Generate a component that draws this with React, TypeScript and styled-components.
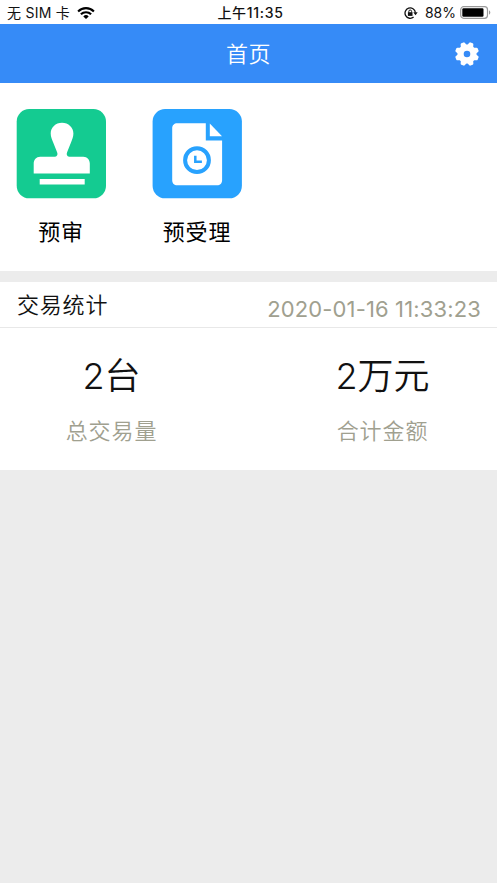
import React from 'react';
import styled, { createGlobalStyle } from 'styled-components';

const GlobalStyle = createGlobalStyle`
  * { box-sizing: border-box; }
  html, body { margin: 0; background: #ececec; }
  body { font-family: Inter, "Noto Sans CJK SC", sans-serif; color: #111; }
  svg { display: block; flex: none; }
`;

const Screen = styled.main`
  min-height: 883px;
  display: flex;
  flex-direction: column;
  background: #ececec;
`;

const StatusBar = styled.div`
  height: 24px;
  padding: 2px 6px 0 7px;
  display: grid;
  grid-template-columns: 1fr auto 1fr;
  align-items: center;
  background: #fff;
  font-size: 14px;
  line-height: 20px;
  white-space: nowrap;
`;

const StatusGroup = styled.div<{ $end?: boolean }>`
  display: flex;
  align-items: center;
  justify-content: ${p => (p.$end ? 'flex-end' : 'flex-start')};
  gap: ${p => (p.$end ? '4px' : '7px')};
`;

const Carrier = styled.span`
  letter-spacing: 0.25px;
`;

const Clock = styled.span`
  font-size: 14px;
  font-weight: 500;
  letter-spacing: 0.7px;
  padding-left: 3px;
`;

const Percent = styled.span`
  margin-left: 3px;
`;

const Header = styled.header`
  height: 59px;
  padding: 0 17px;
  display: grid;
  grid-template-columns: 26px 1fr 26px;
  align-items: center;
  background: #368bf7;
  color: #fff;
`;

const Title = styled.h1`
  margin: 0;
  font-size: 22px;
  font-weight: 350;
  line-height: 32px;
  letter-spacing: 0.6px;
  text-align: center;
`;

const IconButton = styled.button`
  width: 26px;
  height: 26px;
  padding: 0;
  border: 0;
  background: none;
  color: inherit;
`;

const Menu = styled.nav`
  height: 188px;
  padding: 26px 16px 0;
  display: flex;
  gap: 46px;
  background: #fff;
`;

const MenuItem = styled.div`
  width: 90px;
  display: flex;
  flex-direction: column;
  align-items: center;
  gap: 17px;
`;

const MenuLabel = styled.span`
  color: #000;
  font-size: 22px;
  line-height: 32px;
  letter-spacing: 0.8px;
`;

const Panel = styled.section`
  margin-top: 11px;
  background: #fff;
`;

const PanelHead = styled.div`
  height: 46px;
  padding: 0 16px 0 17px;
  display: flex;
  justify-content: space-between;
  border-bottom: 1px solid #e8e8e8;
`;

const PanelTitle = styled.h2`
  margin: 7px 0 0;
  font-size: 22px;
  font-weight: 350;
  line-height: 32px;
  letter-spacing: 0.8px;
`;

const Timestamp = styled.time`
  margin-top: 11px;
  color: #a0a08f;
  font-size: 22px;
  line-height: 32px;
  letter-spacing: 0.14px;
`;

const Stats = styled.div`
  height: 142px;
  padding: 23px 0 0;
  display: grid;
  grid-template-columns: 223px 274px;
`;

const Stat = styled.div<{ $wide?: boolean }>`
  padding-left: ${p => (p.$wide ? '45px' : '0')};
  display: flex;
  flex-direction: column;
  align-items: center;
  gap: 13px;
`;

const StatValue = styled.div`
  font-size: 36px;
  font-weight: 350;
  line-height: 51px;
`;

const StatLabel = styled.div`
  color: #a0a08f;
  font-size: 22px;
  font-weight: 350;
  line-height: 32px;
  letter-spacing: 0.9px;
`;

const WifiIcon = () => (
  <svg width="18" height="13" viewBox="0 0 18 13" fill="none" stroke="#000" strokeWidth="2.1">
    <path d="M1.1 4.4a11.2 11.2 0 0 1 15.8 0M3.9 7.3a7.2 7.2 0 0 1 10.2 0" />
    <path d="M9 12.1 6.3 9.4a3.8 3.8 0 0 1 5.4 0Z" fill="#000" stroke="none" />
  </svg>
);

const RotationLockIcon = () => (
  <svg width="14" height="13" viewBox="0 0 14 13" fill="none" stroke="#111">
    <path d="M9.6 10.1A5.2 5.2 0 1 1 11.4 5.5" strokeWidth="1.3" />
    <path d="M9.3 5.3h4.4l-2.2 2.9Z" fill="#111" stroke="none" />
    <path d="M3.9 5.2h4.6v3.7H3.9z" fill="#111" stroke="none" />
    <path d="M4.8 5.5V4.4a1.4 1.4 0 0 1 2.8 0v1.1" strokeWidth="1" />
  </svg>
);

const BatteryIcon = () => (
  <svg width="31" height="14" viewBox="0 0 31 14">
    <rect x=".7" y=".7" width="26.8" height="11.6" rx="3" fill="#fff" stroke="#999" strokeWidth="1.2" />
    <rect x="2.3" y="2.3" width="21.2" height="8.4" rx="1.2" fill="#000" />
    <path d="M29 4.3c1.8.7 1.8 3.7 0 4.4Z" fill="#999" />
  </svg>
);

const GearIcon = () => {
  const teeth = [0, 45, 90, 135, 180, 225, 270, 315];
  return (
    <svg width="26" height="26" viewBox="-13 -13 26 26">
      <g fill="#fff" transform="rotate(22.5)">
        {teeth.map(a => (
          <path key={a} transform={`rotate(${a})`} d="M-3.2-8.4-2.2-11.3Q-1.9-12-1.2-12H1.2Q1.9-12 2.2-11.3L3.2-8.4Z" />
        ))}
      </g>
      <circle r="6.4" fill="none" stroke="#fff" strokeWidth="6.2" />
    </svg>
  );
};

const StampIcon = () => (
  <svg width="90" height="90" viewBox="0 0 90 90">
    <rect x=".7" y="0" width="89.3" height="89.3" rx="12.5" fill="#14cb91" />
    <path
      fill="#fff"
      d="M46 13.8c6.5 0 11.4 4.8 11.4 10.8 0 3.2-1.3 6.4-2.5 9.2l-3.9 9.7c-.8 2 .1 4.2 2.1 4.2h14.2c4 0 6.5 3 6.5 6.8v9.9H17.7v-9.9c0-3.8 2.5-6.8 6.5-6.8h14.9c2 0 2.9-2.2 2.1-4.2l-3.9-9.7c-1.2-2.8-2.6-6-2.6-9.2 0-6 4.8-10.8 11.3-10.8Z"
    />
    <path d="M23.7 70h45v5.6h-45z" fill="#fff" />
  </svg>
);

const DocumentIcon = () => (
  <svg width="90" height="90" viewBox="0 0 90 90">
    <rect x=".6" y="0" width="89.3" height="89.3" rx="12.5" fill="#28a2fe" />
    <path fill="#fff" d="M25.2 14.2h28.6v17.3h16.3v39.8c0 3-2 5-5 5H25.2c-3 0-5-2-5-5V19.2c0-3 2-5 5-5Z" />
    <path fill="#fff" d="M57.8 14.6 70 27.2H57.8Z" />
    <g fill="none" stroke="#28a2fe">
      <circle cx="45" cy="51.2" r="11.9" strokeWidth="4" />
      <path d="M43.3 46.8v6h6.6" strokeWidth="2.5" />
    </g>
  </svg>
);

export default function App() {
  return (
    <>
      <GlobalStyle />
      <Screen>
        <StatusBar>
          <StatusGroup>
            <Carrier>无 SIM 卡</Carrier>
            <WifiIcon />
          </StatusGroup>
          <Clock>上午11:35</Clock>
          <StatusGroup $end>
            <RotationLockIcon />
            <Percent>88%</Percent>
            <BatteryIcon />
          </StatusGroup>
        </StatusBar>
        <Header>
          <span />
          <Title>首页</Title>
          <IconButton aria-label="设置">
            <GearIcon />
          </IconButton>
        </Header>
        <Menu>
          <MenuItem>
            <StampIcon />
            <MenuLabel>预审</MenuLabel>
          </MenuItem>
          <MenuItem>
            <DocumentIcon />
            <MenuLabel>预受理</MenuLabel>
          </MenuItem>
        </Menu>
        <Panel>
          <PanelHead>
            <PanelTitle>交易统计</PanelTitle>
            <Timestamp>2020-01-16 11:33:23</Timestamp>
          </PanelHead>
          <Stats>
            <Stat>
              <StatValue>2台</StatValue>
              <StatLabel>总交易量</StatLabel>
            </Stat>
            <Stat $wide>
              <StatValue>2万元</StatValue>
              <StatLabel>合计金额</StatLabel>
            </Stat>
          </Stats>
        </Panel>
      </Screen>
    </>
  );
}
